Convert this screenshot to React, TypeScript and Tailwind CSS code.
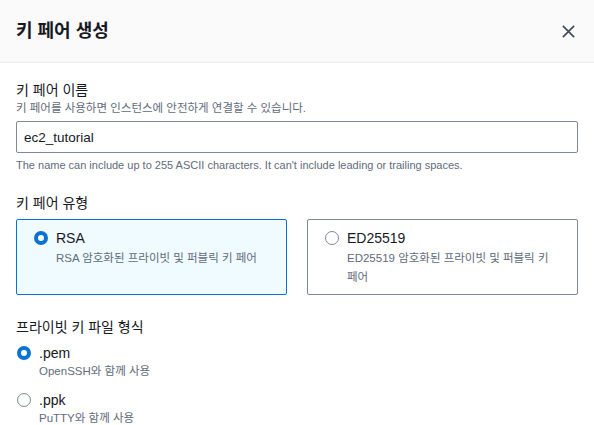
import React, { useState } from 'react';

const font = { fontFamily: '"Liberation Sans", "Noto Sans CJK KR", sans-serif' };

const Radio = ({ checked }: { checked: boolean }) =>
  checked ? (
    <span className="inline-block w-[14px] h-[14px] rounded-full border-[4px] border-[#0972d3] bg-white flex-shrink-0" />
  ) : (
    <span className="inline-block w-[14px] h-[14px] rounded-full border-[1.5px] border-[#7d8998] bg-white flex-shrink-0" />
  );

interface Option {
  id: string;
  label: string;
  description: string;
}

const keyTypes: Option[] = [
  { id: 'rsa', label: 'RSA', description: 'RSA 암호화된 프라이빗 및 퍼블릭 키 페어' },
  { id: 'ed25519', label: 'ED25519', description: 'ED25519 암호화된 프라이빗 및 퍼블릭 키 페어' },
];

const formats: Option[] = [
  { id: 'pem', label: '.pem', description: 'OpenSSH와 함께 사용' },
  { id: 'ppk', label: '.ppk', description: 'PuTTY와 함께 사용' },
];

export default function App() {
  const [name, setName] = useState('ec2_tutorial');
  const [keyType, setKeyType] = useState('rsa');
  const [format, setFormat] = useState('pem');

  return (
    <div className="w-[594px] h-[425px] overflow-hidden bg-white text-[#16191f]" style={font}>
      <div className="h-[63px] bg-[#fafafa] border-b border-[#e9ebed] flex items-center justify-between pl-[16px] pr-[18px]">
        <h2 className="text-[18px] font-bold leading-none">키 페어 생성</h2>
        <button className="text-[#414d5c]" aria-label="닫기">
          <svg width="15" height="15" viewBox="0 0 16 16" fill="none" stroke="currentColor" strokeWidth={1.8}>
            <path d="M2 2l12 12M14 2L2 14" />
          </svg>
        </button>
      </div>

      <div className="px-[16px] pt-[17px]">
        <div className="text-[14px] leading-[20px]">키 페어 이름</div>
        <div className="text-[11.5px] leading-[16px] text-[#5f6b7a]">키 페어를 사용하면 인스턴스에 안전하게 연결할 수 있습니다.</div>
        <input
          value={name}
          onChange={(e) => setName(e.target.value)}
          className="mt-[5px] w-[562px] h-[32px] border border-[#7d8998] rounded-[2px] px-[7px] text-[13.5px] outline-none text-[#16191f]"
          style={font}
        />
        <div className="mt-[4px] text-[11px] leading-[16px] text-[#5f6b7a]">
          The name can include up to 255 ASCII characters. It can't include leading or trailing spaces.
        </div>

        <div className="mt-[20px] text-[14px] leading-[20px]">키 페어 유형</div>
        <div className="mt-[6px] flex gap-[20px] w-[562px]">
          {keyTypes.map((opt) => {
            const sel = keyType === opt.id;
            return (
              <div
                key={opt.id}
                onClick={() => setKeyType(opt.id)}
                className={`flex-1 h-[76px] rounded-[2px] border px-[17px] pt-[7px] cursor-pointer ${
                  sel ? 'border-[#0972d3] bg-[#f0fbff]' : 'border-[#7d8998] bg-white'
                }`}
              >
                <div className="flex items-center gap-[8px]">
                  <Radio checked={sel} />
                  <span className="text-[14px] leading-[22px]">{opt.label}</span>
                </div>
                <div className="pl-[22px] pr-[10px] text-[11.5px] leading-[19px] text-[#5f6b7a]">{opt.description}</div>
              </div>
            );
          })}
        </div>

        <div className="mt-[22px] text-[14px] leading-[20px]">프라이빗 키 파일 형식</div>
        <div className="mt-[6px] flex flex-col gap-[11px]">
          {formats.map((opt) => {
            const sel = format === opt.id;
            return (
              <div key={opt.id} onClick={() => setFormat(opt.id)} className="cursor-pointer">
                <div className="flex items-center gap-[8px] pl-[1px]">
                  <Radio checked={sel} />
                  <span className="text-[14px] leading-[20px]">{opt.label}</span>
                </div>
                <div className="pl-[23px] text-[11.5px] leading-[16px] text-[#5f6b7a]">{opt.description}</div>
              </div>
            );
          })}
        </div>
      </div>
    </div>
  );
}
